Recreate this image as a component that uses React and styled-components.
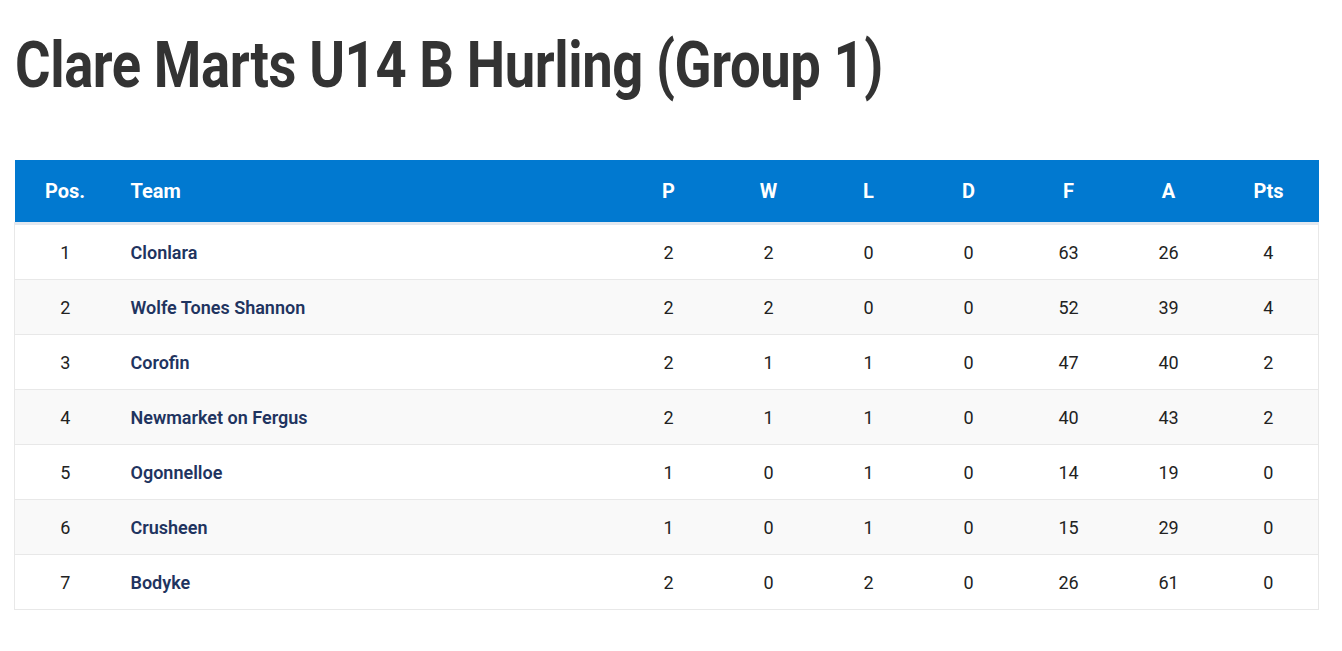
import styled, { createGlobalStyle } from 'styled-components';

const GlobalStyle = createGlobalStyle`
 body {
  margin: 0;
  background: #fff;
  font-family: Roboto, "Liberation Sans", sans-serif;
 }
`;

const Page = styled.div`
 padding: 24px 24px 40px 14px;
`;

const Title = styled.h1`
 margin: 0 0 52px 1px;
 font-family: Roboto, "Liberation Sans", sans-serif;
 font-size: 64px;
 font-weight: 700;
 line-height: 84px;
 color: #333;
 letter-spacing: -0.5px;
 transform: scaleX(0.85);
 transform-origin: left center;
 white-space: nowrap;
`;

const Table = styled.table`
 width: 1304px;
 border-collapse: collapse;
 table-layout: fixed;
`;

const HeadRow = styled.tr`
 background: #0179d0;
 border-bottom: 3px solid #e3e8ef;
`;

const Th = styled.th`
 height: 62px;
 padding: 0;
 color: #fff;
 font-size: 20px;
 font-weight: 700;
 text-align: ${(p) => (p.$left ? 'left' : 'center')};
 padding-left: ${(p) => (p.$left ? '15px' : '0')};
`;

const Row = styled.tr`
 background: ${(p) => (p.$alt ? '#f9f9f9' : '#fff')};
 border-bottom: 1px solid #e8e8e8;
 & > td:first-child {
  border-left: 1px solid #e8e8e8;
 }
 & > td:last-child {
  border-right: 1px solid #e8e8e8;
 }
`;

const Td = styled.td`
 height: 54px;
 padding: 0;
 font-size: 18px;
 color: #222;
 text-align: center;
`;

const TeamCell = styled(Td)`
 text-align: left;
 padding-left: 15px;
 color: #1f3460;
 font-weight: 600;
`;

const rows = [
 ['Clonlara', 2, 2, 0, 0, 63, 26, 4],
 ['Wolfe Tones Shannon', 2, 2, 0, 0, 52, 39, 4],
 ['Corofin', 2, 1, 1, 0, 47, 40, 2],
 ['Newmarket on Fergus', 2, 1, 1, 0, 40, 43, 2],
 ['Ogonnelloe', 1, 0, 1, 0, 14, 19, 0],
 ['Crusheen', 1, 0, 1, 0, 15, 29, 0],
 ['Bodyke', 2, 0, 2, 0, 26, 61, 0],
];

const cols = ['P', 'W', 'L', 'D', 'F', 'A', 'Pts'];

export default function App() {
 return (
  <Page>
   <GlobalStyle />
   <Title>Clare Marts U14 B Hurling (Group 1)</Title>
   <Table>
    <colgroup>
     <col style={{ width: 101 }} />
     <col style={{ width: 503 }} />
     {cols.map((c) => (
      <col key={c} style={{ width: 100 }} />
     ))}
    </colgroup>
    <thead>
     <HeadRow>
      <Th>Pos.</Th>
      <Th $left>Team</Th>
      {cols.map((c) => (
       <Th key={c}>{c}</Th>
      ))}
     </HeadRow>
    </thead>
    <tbody>
     {rows.map(([team, ...nums], i) => (
      <Row key={team} $alt={i % 2 === 1}>
       <Td>{i + 1}</Td>
       <TeamCell>{team}</TeamCell>
       {nums.map((n, j) => (
        <Td key={j}>{n}</Td>
       ))}
      </Row>
     ))}
    </tbody>
   </Table>
  </Page>
 );
}
